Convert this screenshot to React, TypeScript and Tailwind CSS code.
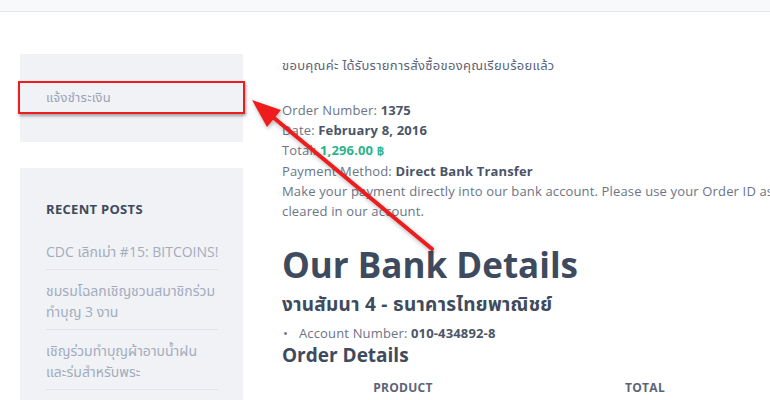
import React from 'react'

const posts = [
  ['CDC เลิกเม่า #15: BITCOINS!'],
  ['ชมรมโฉลกเชิญชวนสมาชิกร่วม', 'ทำบุญ 3 งาน'],
  ['เชิญร่วมทำบุญผ้าอาบน้ำฝน', 'และร่มสำหรับพระ'],
  ['เชิญร่วมงาน'],
]

const font = { fontFamily: "'Open Sans', 'Noto Sans', 'Noto Sans Thai', 'DejaVu Sans', sans-serif" }

const App = () => {
  return (
    <div className='w-[770px] h-[400px] overflow-hidden relative bg-white' style={font}>
      <div className='h-[12px] bg-[#f8f9fa] border-b border-[#e4e6ea]'></div>

      <div className='flex'>
        {/* sidebar */}
        <div className='ml-[20px] w-[223px] shrink-0 mt-[42px]'>
          <div className='relative h-[88px] bg-[#f0f2f6] flex items-center px-[26px]'>
            <span className='text-[13px] tracking-[0.3px] text-[#9aa3b5]'>แจ้งชำระเงิน</span>
            <div className='absolute left-[-2px] top-[27px] w-[227px] h-[33px] border-2 border-[#ee1c1c] shadow-[1px_2px_3px_rgba(0,0,0,0.35)]'></div>
          </div>

          <div className='mt-[26px] bg-[#f0f2f6] pl-[26px] pr-[25px] pt-[31px] h-[300px]'>
            <h3 className='text-[13px] leading-[20px] font-bold tracking-[0.3px] text-[#3d4a5c]'>RECENT POSTS</h3>
            <ul className='mt-[12px]'>
              {posts.map((p, i) => (
                <li key={i} className='pt-[10px] pb-[7px] border-b border-[#dfe3ea] text-[14px] leading-[21px] text-[#a3acbd] whitespace-nowrap'>
                  {p.map((l, j) => <div key={j}>{l}</div>)}
                </li>
              ))}
            </ul>
          </div>
        </div>

        {/* content */}
        <div className='ml-[39px] w-[520px] shrink-0 pt-[43px] text-[13px] tracking-[0.15px] text-[#6b7486]'>
          <p className='leading-[20px] tracking-[0.3px] text-[#5b6476]'>ขอบคุณค่ะ ได้รับรายการสั่งซื้อของคุณเรียบร้อยแล้ว</p>

          <div className='mt-[25px] leading-[20.2px] whitespace-nowrap'>
            <div>Order Number: <b className='text-[#4a5567]'>1375</b></div>
            <div>Date: <b className='text-[#4a5567]'>February 8, 2016</b></div>
            <div>Total: <b className='text-[#2bb38b]'>1,296.00 ฿</b></div>
            <div>Payment Method: <b className='text-[#4a5567]'>Direct Bank Transfer</b></div>
            <div>Make your payment directly into our bank account. Please use your Order ID as the payment reference.</div>
            <div>cleared in our account.</div>
          </div>

          <h1 className='mt-[22px] text-[35px] leading-[44px] font-bold tracking-normal text-[#3e4a5d]'>Our Bank Details</h1>
          <h2 className='mt-[4px] text-[19px] leading-[26px] font-bold tracking-[0.3px] text-[#3e4a5d]'>งานสัมนา 4 - ธนาคารไทยพาณิชย์</h2>
          <ul className='mt-[6px] leading-[20px]'>
            <li className='flex'>
              <span className='w-[17px] pl-[1px]'>•</span>
              <span>Account Number: <b className='text-[#4a5567]'>010-434892-8</b></span>
            </li>
          </ul>
          <h2 className='text-[19px] leading-[24px] font-bold tracking-normal text-[#3e4a5d]'>Order Details</h2>
          <div className='mt-[12px] grid grid-cols-2 w-[484px] text-center text-[12px] font-bold tracking-[0.3px] text-[#5b6476]'>
            <div>PRODUCT</div>
            <div>TOTAL</div>
          </div>
        </div>
      </div>

      {/* annotation arrow */}
      <svg className='absolute inset-0 pointer-events-none' width='770' height='400' viewBox='0 0 770 400'>
        <g style={{ filter: 'drop-shadow(1px 2px 2px rgba(0,0,0,0.3))' }}>
          <line x1='432' y1='249' x2='268' y2='113' stroke='#ee1c1c' strokeWidth='4' strokeLinecap='round' />
          <polygon points='252,100 281,110 267,127' fill='#ee1c1c' />
        </g>
      </svg>
    </div>
  )
}

export default App
